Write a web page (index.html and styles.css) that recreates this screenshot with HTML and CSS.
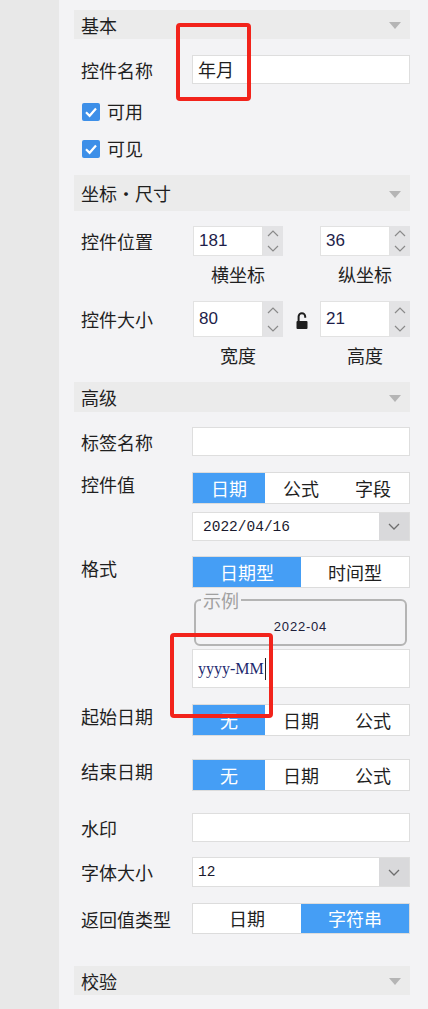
FILE: index.html
```html
<!DOCTYPE html>
<html lang="zh-CN">
<head>
    <meta charset="UTF-8">
    <meta name="viewport" content="width=device-width, initial-scale=1.0">
    <title>控件属性</title>
    <link rel="stylesheet" href="styles.css">
</head>
<body>
    <div class="side"></div>

    <div class="panel">
        <!-- 基本 -->
        <div class="group-head"><span>基本</span><i class="arrow"></i></div>
        <div class="row r-name">
            <div class="label">控件名称</div>
            <div class="field"><div class="input">年月</div></div>
        </div>
        <div class="check r-check">
            <span class="box"><svg width="18" height="18" viewBox="0 0 18 18"><path d="M4 9.3 L7.6 12.8 L14 5.6" fill="none" stroke="#fff" stroke-width="2.2"/></svg></span>
            <span>可用</span>
        </div>
        <div class="check r-check">
            <span class="box"><svg width="18" height="18" viewBox="0 0 18 18"><path d="M4 9.3 L7.6 12.8 L14 5.6" fill="none" stroke="#fff" stroke-width="2.2"/></svg></span>
            <span>可见</span>
        </div>

        <!-- 坐标・尺寸 -->
        <div class="group-head tall r-head2"><span>坐标・尺寸</span><i class="arrow"></i></div>
        <div class="row r-pos">
            <div class="label">控件位置</div>
            <div class="field pair">
                <div class="spin">
                    <div class="num">181</div>
                    <div class="steps">
                        <svg width="12" height="7" viewBox="0 0 12 7"><path d="M1 6 L6 1 L11 6" fill="none" stroke="#8a8a8a" stroke-width="1.2"/></svg>
                        <svg width="12" height="7" viewBox="0 0 12 7"><path d="M1 1 L6 6 L11 1" fill="none" stroke="#8a8a8a" stroke-width="1.2"/></svg>
                    </div>
                </div>
                <div class="spin">
                    <div class="num">36</div>
                    <div class="steps">
                        <svg width="12" height="7" viewBox="0 0 12 7"><path d="M1 6 L6 1 L11 6" fill="none" stroke="#8a8a8a" stroke-width="1.2"/></svg>
                        <svg width="12" height="7" viewBox="0 0 12 7"><path d="M1 1 L6 6 L11 1" fill="none" stroke="#8a8a8a" stroke-width="1.2"/></svg>
                    </div>
                </div>
            </div>
        </div>
        <div class="row r-sub">
            <div class="label"></div>
            <div class="field pair"><span class="cap">横坐标</span><span class="cap">纵坐标</span></div>
        </div>
        <div class="row r-size">
            <div class="label">控件大小</div>
            <div class="field pair">
                <div class="spin big">
                    <div class="num">80</div>
                    <div class="steps">
                        <svg width="12" height="7" viewBox="0 0 12 7"><path d="M1 6 L6 1 L11 6" fill="none" stroke="#8a8a8a" stroke-width="1.2"/></svg>
                        <svg width="12" height="7" viewBox="0 0 12 7"><path d="M1 1 L6 6 L11 1" fill="none" stroke="#8a8a8a" stroke-width="1.2"/></svg>
                    </div>
                </div>
                <svg class="lock" width="12" height="17" viewBox="0 0 12 17">
                    <path d="M2.6 10 V4.6 A3.3 3.3 0 0 1 9.2 4.6 V5.8" fill="none" stroke="#1e1e1e" stroke-width="2"/>
                    <rect x="0.5" y="9" width="11" height="8" rx="1" fill="#1e1e1e"/>
                </svg>
                <div class="spin big">
                    <div class="num">21</div>
                    <div class="steps">
                        <svg width="12" height="7" viewBox="0 0 12 7"><path d="M1 6 L6 1 L11 6" fill="none" stroke="#8a8a8a" stroke-width="1.2"/></svg>
                        <svg width="12" height="7" viewBox="0 0 12 7"><path d="M1 1 L6 6 L11 1" fill="none" stroke="#8a8a8a" stroke-width="1.2"/></svg>
                    </div>
                </div>
            </div>
        </div>
        <div class="row r-sub">
            <div class="label"></div>
            <div class="field pair"><span class="cap">宽度</span><span class="cap">高度</span></div>
        </div>

        <!-- 高级 -->
        <div class="group-head mid r-head3"><span>高级</span><i class="arrow"></i></div>
        <div class="row r-tag">
            <div class="label">标签名称</div>
            <div class="field"><div class="input"></div></div>
        </div>
        <div class="row top r-value">
            <div class="label">控件值</div>
            <div class="field">
                <div class="seg"><span class="on">日期</span><span>公式</span><span>字段</span></div>
                <div class="select s-date">
                    <div class="val">2022/04/16</div>
                    <div class="drop"><svg width="12" height="7" viewBox="0 0 12 7"><path d="M1 1 L6 6 L11 1" fill="none" stroke="#6e6e6e" stroke-width="1.3"/></svg></div>
                </div>
            </div>
        </div>
        <div class="row top r-format">
            <div class="label">格式</div>
            <div class="field">
                <div class="seg"><span class="on">日期型</span><span>时间型</span></div>
                <fieldset class="sample">
                    <legend>示例</legend>
                    <div class="sample-text">2022-04</div>
                </fieldset>
                <div class="input pattern"><span>yyyy-MM</span><i class="cursor"></i></div>
            </div>
        </div>
        <div class="row top r-start">
            <div class="label">起始日期</div>
            <div class="field"><div class="seg"><span class="on">无</span><span>日期</span><span>公式</span></div></div>
        </div>
        <div class="row top r-end">
            <div class="label">结束日期</div>
            <div class="field"><div class="seg"><span class="on">无</span><span>日期</span><span>公式</span></div></div>
        </div>
        <div class="row r-mark">
            <div class="label">水印</div>
            <div class="field"><div class="input"></div></div>
        </div>
        <div class="row r-font">
            <div class="label">字体大小</div>
            <div class="field">
                <div class="select s-font">
                    <div class="val">12</div>
                    <div class="drop"><svg width="12" height="7" viewBox="0 0 12 7"><path d="M1 1 L6 6 L11 1" fill="none" stroke="#6e6e6e" stroke-width="1.3"/></svg></div>
                </div>
            </div>
        </div>
        <div class="row r-return">
            <div class="label">返回值类型</div>
            <div class="field"><div class="seg slim"><span>日期</span><span class="on">字符串</span></div></div>
        </div>

        <!-- 校验 -->
        <div class="group-head r-head4"><span>校验</span><i class="arrow"></i></div>
    </div>

    <div class="mark mark-name"></div>
    <div class="mark mark-format"></div>
</body>
</html>
```

FILE: styles.css
```css
body {
    margin: 0;
    display: flex;
    min-height: 100vh;
    position: relative;
    background-color: #f3f3f5;
    font-family: "Noto Sans CJK SC", "Liberation Sans", sans-serif;
    font-size: 18px;
    color: #1f1f1f;
}
* {
    box-sizing: border-box;
}
.side {
    width: 59px;
    flex-shrink: 0;
    background-color: #e8e8e8;
}
.panel {
    flex: 1;
    padding: 10px 18px 0 15px;
}

/* group headers */
.group-head {
    height: 29px;
    display: flex;
    align-items: center;
    justify-content: space-between;
    padding: 0 9px 0 7px;
    background-color: #ebebeb;
    line-height: 20px;
}
.group-head.tall {
    height: 36px;
}
.group-head.mid {
    height: 30px;
}
.arrow {
    width: 0;
    height: 0;
    margin-top: 2px;
    border-left: 6px solid transparent;
    border-right: 6px solid transparent;
    border-top: 7px solid #b5b5b5;
}

/* rows */
.row {
    display: flex;
    align-items: center;
}
.row.top {
    align-items: flex-start;
}
.label {
    width: 118px;
    flex-shrink: 0;
    padding-left: 7px;
    line-height: 20px;
}
.row.top .label {
    padding-top: 2px;
}
.field {
    width: 218px;
}

.input {
    height: 29px;
    padding-left: 5px;
    background-color: #fff;
    border: 1px solid #dedede;
    line-height: 27px;
}

/* checkboxes */
.check {
    display: flex;
    align-items: center;
    gap: 7px;
    height: 19px;
    padding-left: 8px;
    line-height: 19px;
}
.box {
    width: 18px;
    height: 18px;
    display: flex;
    background-color: #3d8fe8;
    border-radius: 2px;
}

/* spinners */
.pair {
    display: flex;
    align-items: center;
    justify-content: space-between;
    padding-left: 1px;
}
.spin {
    width: 90px;
    height: 30px;
    display: flex;
}
.spin.big {
    height: 36px;
}
.num {
    flex: 1;
    padding-left: 5px;
    background-color: #fff;
    border: 1px solid #e2e2e2;
    font-family: "Liberation Sans", Arial, sans-serif;
    font-size: 17px;
    color: #1e1e4a;
    display: flex;
    align-items: center;
}
.steps {
    width: 20px;
    display: flex;
    flex-direction: column;
    align-items: center;
    justify-content: space-around;
    background-color: #e3e3e5;
}
.cap {
    width: 90px;
    text-align: center;
    line-height: 20px;
}
.lock {
    margin-top: 2px;
}

/* segmented buttons */
.seg {
    height: 32px;
    display: flex;
    background-color: #fff;
    border: 1px solid #dcdcdc;
}
.seg span {
    flex: 1;
    text-align: center;
    line-height: 30px;
}
.seg .on {
    background-color: #459ef5;
    color: #fff;
}
.seg.slim {
    height: 31px;
}
.seg.slim span {
    line-height: 29px;
}

/* selects */
.select {
    display: flex;
    background-color: #fff;
    border: 1px solid #dedede;
}
.s-date {
    height: 29px;
    margin-top: 8px;
}
.s-font {
    height: 30px;
}
.select .val {
    flex: 1;
    font-family: "Liberation Mono", monospace;
    font-size: 14.5px;
    color: #1a1a2e;
    display: flex;
    align-items: center;
}
.s-date .val {
    padding-left: 10px;
}
.s-font .val {
    padding-left: 5px;
}
.drop {
    width: 30px;
    display: flex;
    align-items: center;
    justify-content: center;
    background-color: #d9d9db;
}

/* sample box */
.sample {
    margin: 3px 3px 0 2px;
    padding: 0;
    border: 2px solid #b4b4b4;
    border-radius: 6px;
    min-width: 0;
}
.sample legend {
    margin-left: 5px;
    padding: 0 2px;
    line-height: 18px;
    color: #a0a0a0;
}
.sample-text {
    height: 35px;
    line-height: 35px;
    text-align: center;
    font-family: "Liberation Sans", Arial, sans-serif;
    font-size: 13px;
    letter-spacing: 0.8px;
    color: #20203a;
}
.pattern {
    height: 39px;
    margin-top: 3px;
    display: flex;
    align-items: center;
    font-family: "Liberation Serif", serif;
    font-size: 16px;
    color: #1d2a6e;
}
.cursor {
    width: 1px;
    height: 22px;
    margin-left: 1px;
    background-color: #222;
}

/* vertical spacing */
.r-name { margin-top: 16px; }
.r-check { margin-top: 18px; }
.r-head2 { margin-top: 17px; }
.r-pos { margin-top: 15px; }
.r-sub { margin-top: 8px; }
.r-size { margin-top: 17px; }
.r-head3 { margin-top: 17px; }
.r-tag { margin-top: 15px; }
.r-value { margin-top: 16px; }
.r-format { margin-top: 15px; }
.r-start { margin-top: 16px; }
.r-end { margin-top: 23px; }
.r-mark { margin-top: 22px; }
.r-font { margin-top: 15px; }
.r-return { margin-top: 16px; }
.r-head4 { margin-top: 32px; }

/* red annotation boxes */
.mark {
    position: absolute;
    border: 4px solid #f2231b;
    border-radius: 4px;
}
.mark-name {
    left: 176px;
    top: 23px;
    width: 75px;
    height: 78px;
}
.mark-format {
    left: 170px;
    top: 633px;
    width: 103px;
    height: 85px;
}
```
